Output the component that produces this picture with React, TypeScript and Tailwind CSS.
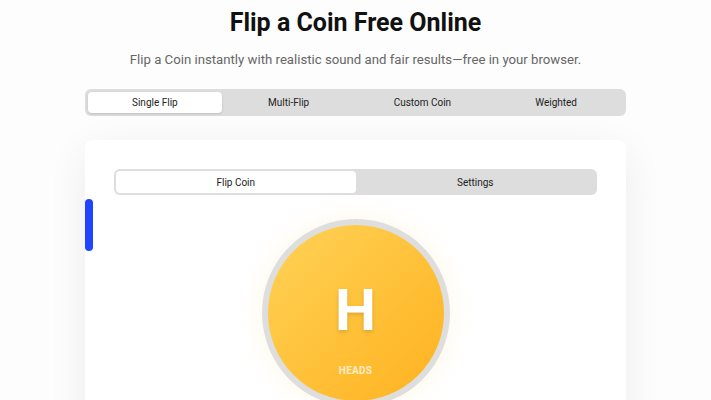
const tabs = ['Single Flip', 'Multi-Flip', 'Custom Coin', 'Weighted'];

export default function App() {
  return (
    <div className="relative min-h-screen bg-[#fdfdfd] font-['Roboto',sans-serif] text-[#111]">
      <div className="mx-auto flex w-[541px] flex-col items-center pt-[6px]">
        <h1 className="text-[25px] font-bold leading-[34px] text-[#111]">Flip a Coin Free Online</h1>
        <p className="mt-[10px] text-[13.2px] leading-[20px] text-[#666]">
          Flip a Coin instantly with realistic sound and fair results—free in your browser.
        </p>

        <div className="mt-[19px] grid w-full grid-cols-4 gap-0 rounded-md bg-[#dddddd] p-[3px]">
          {tabs.map((t, i) => (
            <button
              key={t}
              className={
                i === 0
                  ? 'h-[21px] rounded-[4px] bg-white text-[10px] text-[#222] shadow-sm'
                  : 'h-[21px] text-[10px] text-[#222]'
              }
            >
              {t}
            </button>
          ))}
        </div>

        <div className="mt-[24px] w-full rounded-lg bg-white px-[29px] pt-[29px] pb-10 shadow-[0_10px_40px_rgba(0,0,0,0.07)]">
          <div className="grid grid-cols-2 rounded-md bg-[#dddddd] p-[2px]">
            <button className="h-[22px] rounded-[4px] bg-white text-[10px] text-[#222]">Flip Coin</button>
            <button className="h-[22px] text-[10px] text-[#222]">Settings</button>
          </div>

          <div className="mt-[24px] flex justify-center">
            <div className="rounded-full bg-[#dedede] p-[6px] shadow-[0_0_24px_rgba(255,200,80,0.15)]">
              <div className="flex h-[176px] w-[176px] flex-col items-center rounded-full bg-[linear-gradient(135deg,#ffd257,#ffb21f)]">
                <span className="mt-[51px] text-[58px] font-bold leading-[68px] text-white [text-shadow:0_2px_4px_rgba(0,0,0,0.15)]">
                  H
                </span>
                <span className="mt-[19px] text-[10px] font-bold tracking-wide text-white/75">HEADS</span>
              </div>
            </div>
          </div>
        </div>
      </div>

      <div className="absolute left-[85px] top-[199px] h-[52px] w-[8px] rounded-full bg-[#1f45ff]" />
    </div>
  );
}
